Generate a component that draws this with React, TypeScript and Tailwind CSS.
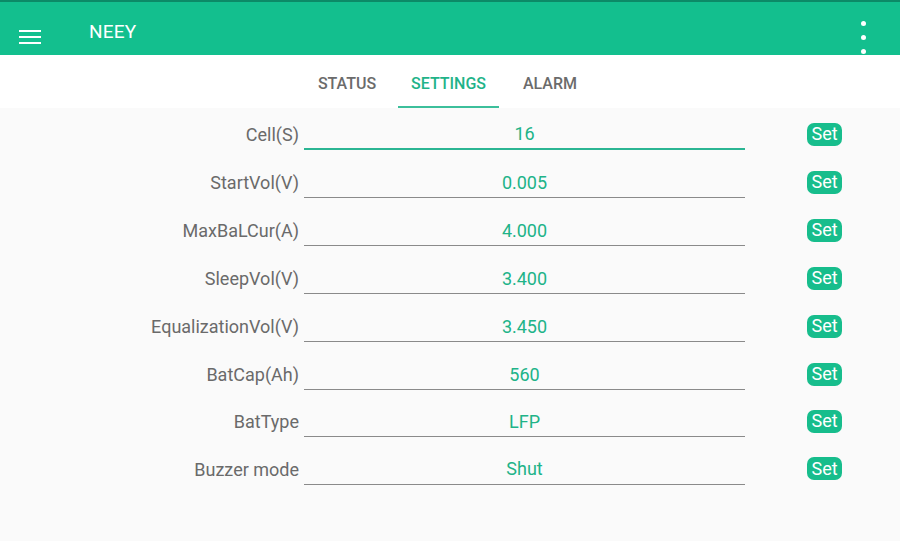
import React from "react";

const rows: { label: string; value: string; focused?: boolean; h: string }[] = [
  { label: "Cell(S)", value: "16", focused: true, h: "h-[48px]" },
  { label: "StartVol(V)", value: "0.005", h: "h-[48px]" },
  { label: "MaxBaLCur(A)", value: "4.000", h: "h-[48px]" },
  { label: "SleepVol(V)", value: "3.400", h: "h-[48px]" },
  { label: "EqualizationVol(V)", value: "3.450", h: "h-[48px]" },
  { label: "BatCap(Ah)", value: "560", h: "h-[48px]" },
  { label: "BatType", value: "LFP", h: "h-[46px]" },
  { label: "Buzzer mode", value: "Shut", h: "h-[49px]" },
];

export default function App() {
  return (
    <div
      className="w-[900px] h-[541px] bg-[#fafafa] flex flex-col overflow-hidden"
      style={{ fontFamily: "Roboto, 'Noto Sans', sans-serif" }}
    >
      <div className="h-[2px] bg-[#0c8a67]" />
      <div className="h-[53px] bg-[#13bf8e] flex items-center relative">
        <div className="ml-[19px] mt-[17px] w-[22px] flex flex-col gap-[4px]">
          <div className="h-[2px] bg-white" />
          <div className="h-[2px] bg-white" />
          <div className="h-[2px] bg-white" />
        </div>
        <div className="ml-[48px] mt-[7px] text-white text-[19px] tracking-[0.2px]">NEEY</div>
        <div className="ml-auto mr-[34px] mt-[17px] flex flex-col gap-[9px]">
          <div className="w-[5px] h-[5px] rounded-full bg-white" />
          <div className="w-[5px] h-[5px] rounded-full bg-white" />
          <div className="w-[5px] h-[5px] rounded-full bg-white" />
        </div>
      </div>
      <div className="h-[53px] bg-white flex pl-[296px]">
        <div className="w-[102px] flex items-center justify-center text-[16px] font-medium text-[#6b6b6b] pt-[5px]">
          STATUS
        </div>
        <div className="w-[101px] flex items-center justify-center text-[16px] font-medium text-[#1fb389] relative pt-[5px]">
          SETTINGS
          <div className="absolute bottom-0 left-0 right-0 h-[2px] bg-[#3cbf9b]" />
        </div>
        <div className="w-[102px] flex items-center justify-center text-[16px] font-medium text-[#6b6b6b] pt-[5px]">
          ALARM
        </div>
      </div>
      <div className="flex flex-col pt-[2px]">
        {rows.map((r) => (
          <div key={r.label} className={r.h + " flex items-center"}>
            <div className="w-[299px] text-right text-[18px] text-[#6a6a6a] pt-[1px]">{r.label}</div>
            <div
              className={
                r.focused
                  ? "ml-[5px] w-[441px] h-[32px] flex items-center justify-center text-[18px] text-[#20b388] border-b-2 border-[#2bb593] pt-[1px]"
                  : "ml-[5px] w-[441px] h-[32px] flex items-center justify-center text-[18px] text-[#20b388] border-b-[1.5px] border-[#8a8a8a] pt-[1px]"
              }
            >
              {r.value}
            </div>
            <div className="ml-[62px] w-[35px] h-[23px] rounded-[7px] bg-[#17bd8c] text-white text-[18px] flex items-center justify-center leading-none">
              Set
            </div>
          </div>
        ))}
      </div>
    </div>
  );
}
